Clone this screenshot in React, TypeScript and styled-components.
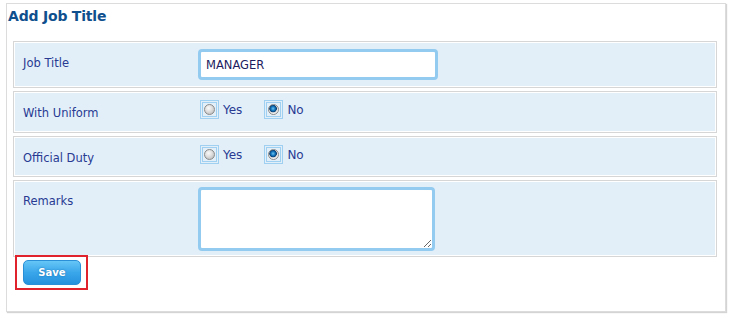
import styled, { createGlobalStyle } from "styled-components";

const GlobalStyle = createGlobalStyle`
  html, body {
    margin: 0;
    padding: 0;
    background: #fff;
  }
  body {
    font-family: "DejaVu Sans", Verdana, sans-serif;
  }
`;

const Page = styled.div`
  padding: 3px 5px 6px 6px;
`;

const Panel = styled.div`
  height: 309px;
  border: 1px solid #dcdcdc;
  box-shadow: 1px 1px 1px #d4d4d4;
  background: #fff;
  box-sizing: border-box;
`;

const Title = styled.h2`
  margin: 0;
  padding: 4px 0 0 1px;
  height: 37px;
  box-sizing: border-box;
  font-size: 14px;
  font-weight: bold;
  color: #0f4f8e;
  letter-spacing: -0.2px;
`;

const Form = styled.div`
  display: flex;
  flex-direction: column;
  gap: 3px;
  margin: 0 8px 0 6px;
`;

const Row = styled.div<{ $pad: string }>`
  display: grid;
  grid-template-columns: 175px 1fr;
  padding: ${(p) => p.$pad};
  padding-left: 9px;
  background: #e2eff9;
  border: 1px solid #d6d6d6;
  box-shadow: inset 0 0 0 1px #fff;
`;

const Label = styled.div<{ $top: number }>`
  padding-top: ${(p) => p.$top}px;
  font-size: 11.5px;
  line-height: 14px;
  color: #283a92;
`;

const Field = styled.div`
  display: flex;
  align-items: flex-start;
`;

const TextInput = styled.input`
  width: 240px;
  height: 31px;
  box-sizing: border-box;
  border: 3px solid #92cbef;
  border-radius: 4px;
  padding: 0 5px;
  font-family: "DejaVu Sans", Verdana, sans-serif;
  font-size: 11.5px;
  color: #1c1c5e;
  background: #fff;
  outline: none;
`;

const TextArea = styled.textarea`
  width: 237px;
  height: 64px;
  box-sizing: border-box;
  border: 3px solid #92cbef;
  border-radius: 4px;
  font-family: "DejaVu Sans", Verdana, sans-serif;
  font-size: 11px;
  outline: none;
  margin: 0;
`;

const RadioGroup = styled.div`
  display: flex;
  align-items: center;
  gap: 22px;
  margin-left: 2px;
`;

const Option = styled.label`
  display: flex;
  align-items: center;
  gap: 4px;
  font-size: 12px;
  color: #283a92;
`;

const RadioFrame = styled.span`
  width: 19px;
  height: 19px;
  box-sizing: border-box;
  border: 1px solid #9fd0f2;
  padding: 1px;
  display: flex;
`;

const RadioInner = styled.span`
  flex: 1;
  border: 1px solid #9fd0f2;
  display: flex;
  align-items: center;
  justify-content: center;
`;

const RadioCircle = styled.span<{ $checked: boolean }>`
  width: 11px;
  height: 11px;
  border-radius: 50%;
  box-sizing: border-box;
  border: 1px solid #8a8a8a;
  background: ${(p) =>
    p.$checked
      ? "radial-gradient(circle at 45% 40%, #6fc3f0 0, #1479c0 2px, #0a3f73 3.5px, #d8d8d8 4px, #f4f4f4 5px)"
      : "radial-gradient(circle at 40% 35%, #fafafa 0, #e2e2e2 3px, #c4c4c4 6px)"};
`;

const ButtonBar = styled.div`
  margin: -5px 0 0 2px;
  align-self: flex-start;
  border: 2px solid #e0222c;
  padding: 3px 5px 3px 6px;
  display: inline-flex;
`;

const SaveButton = styled.button`
  width: 58px;
  height: 25px;
  border: 1px solid #2a8fd6;
  border-radius: 5px;
  background: linear-gradient(#66c6f7, #3aa6ea 50%, #2592de);
  color: #fff;
  font-family: "DejaVu Sans", Verdana, sans-serif;
  font-weight: bold;
  font-size: 10px;
  text-shadow: 0 0 2px #1a6fae;
  cursor: pointer;
  padding: 0;
`;

function Radio({ label, checked }: { label: string; checked: boolean }) {
  return (
    <Option>
      <RadioFrame>
        <RadioInner>
          <RadioCircle $checked={checked} />
        </RadioInner>
      </RadioFrame>
      {label}
    </Option>
  );
}

function YesNo() {
  return (
    <RadioGroup>
      <Radio label="Yes" checked={false} />
      <Radio label="No" checked />
    </RadioGroup>
  );
}

const App = () => {
  return (
    <Page>
      <GlobalStyle />
      <Panel>
        <Title>Add Job Title</Title>
        <Form>
          <Row $pad="7px 0">
            <Label $top={7}>Job Title</Label>
            <Field>
              <TextInput defaultValue="MANAGER" />
            </Field>
          </Row>
          <Row $pad="8px 0 12px">
            <Label $top={6}>With Uniform</Label>
            <Field>
              <YesNo />
            </Field>
          </Row>
          <Row $pad="8px 0 11px">
            <Label $top={6}>Official Duty</Label>
            <Field>
              <YesNo />
            </Field>
          </Row>
          <Row $pad="6px 0 5px">
            <Label $top={7}>Remarks</Label>
            <Field>
              <TextArea />
            </Field>
          </Row>
          <ButtonBar>
            <SaveButton>Save</SaveButton>
          </ButtonBar>
        </Form>
      </Panel>
    </Page>
  );
};

export default App;
